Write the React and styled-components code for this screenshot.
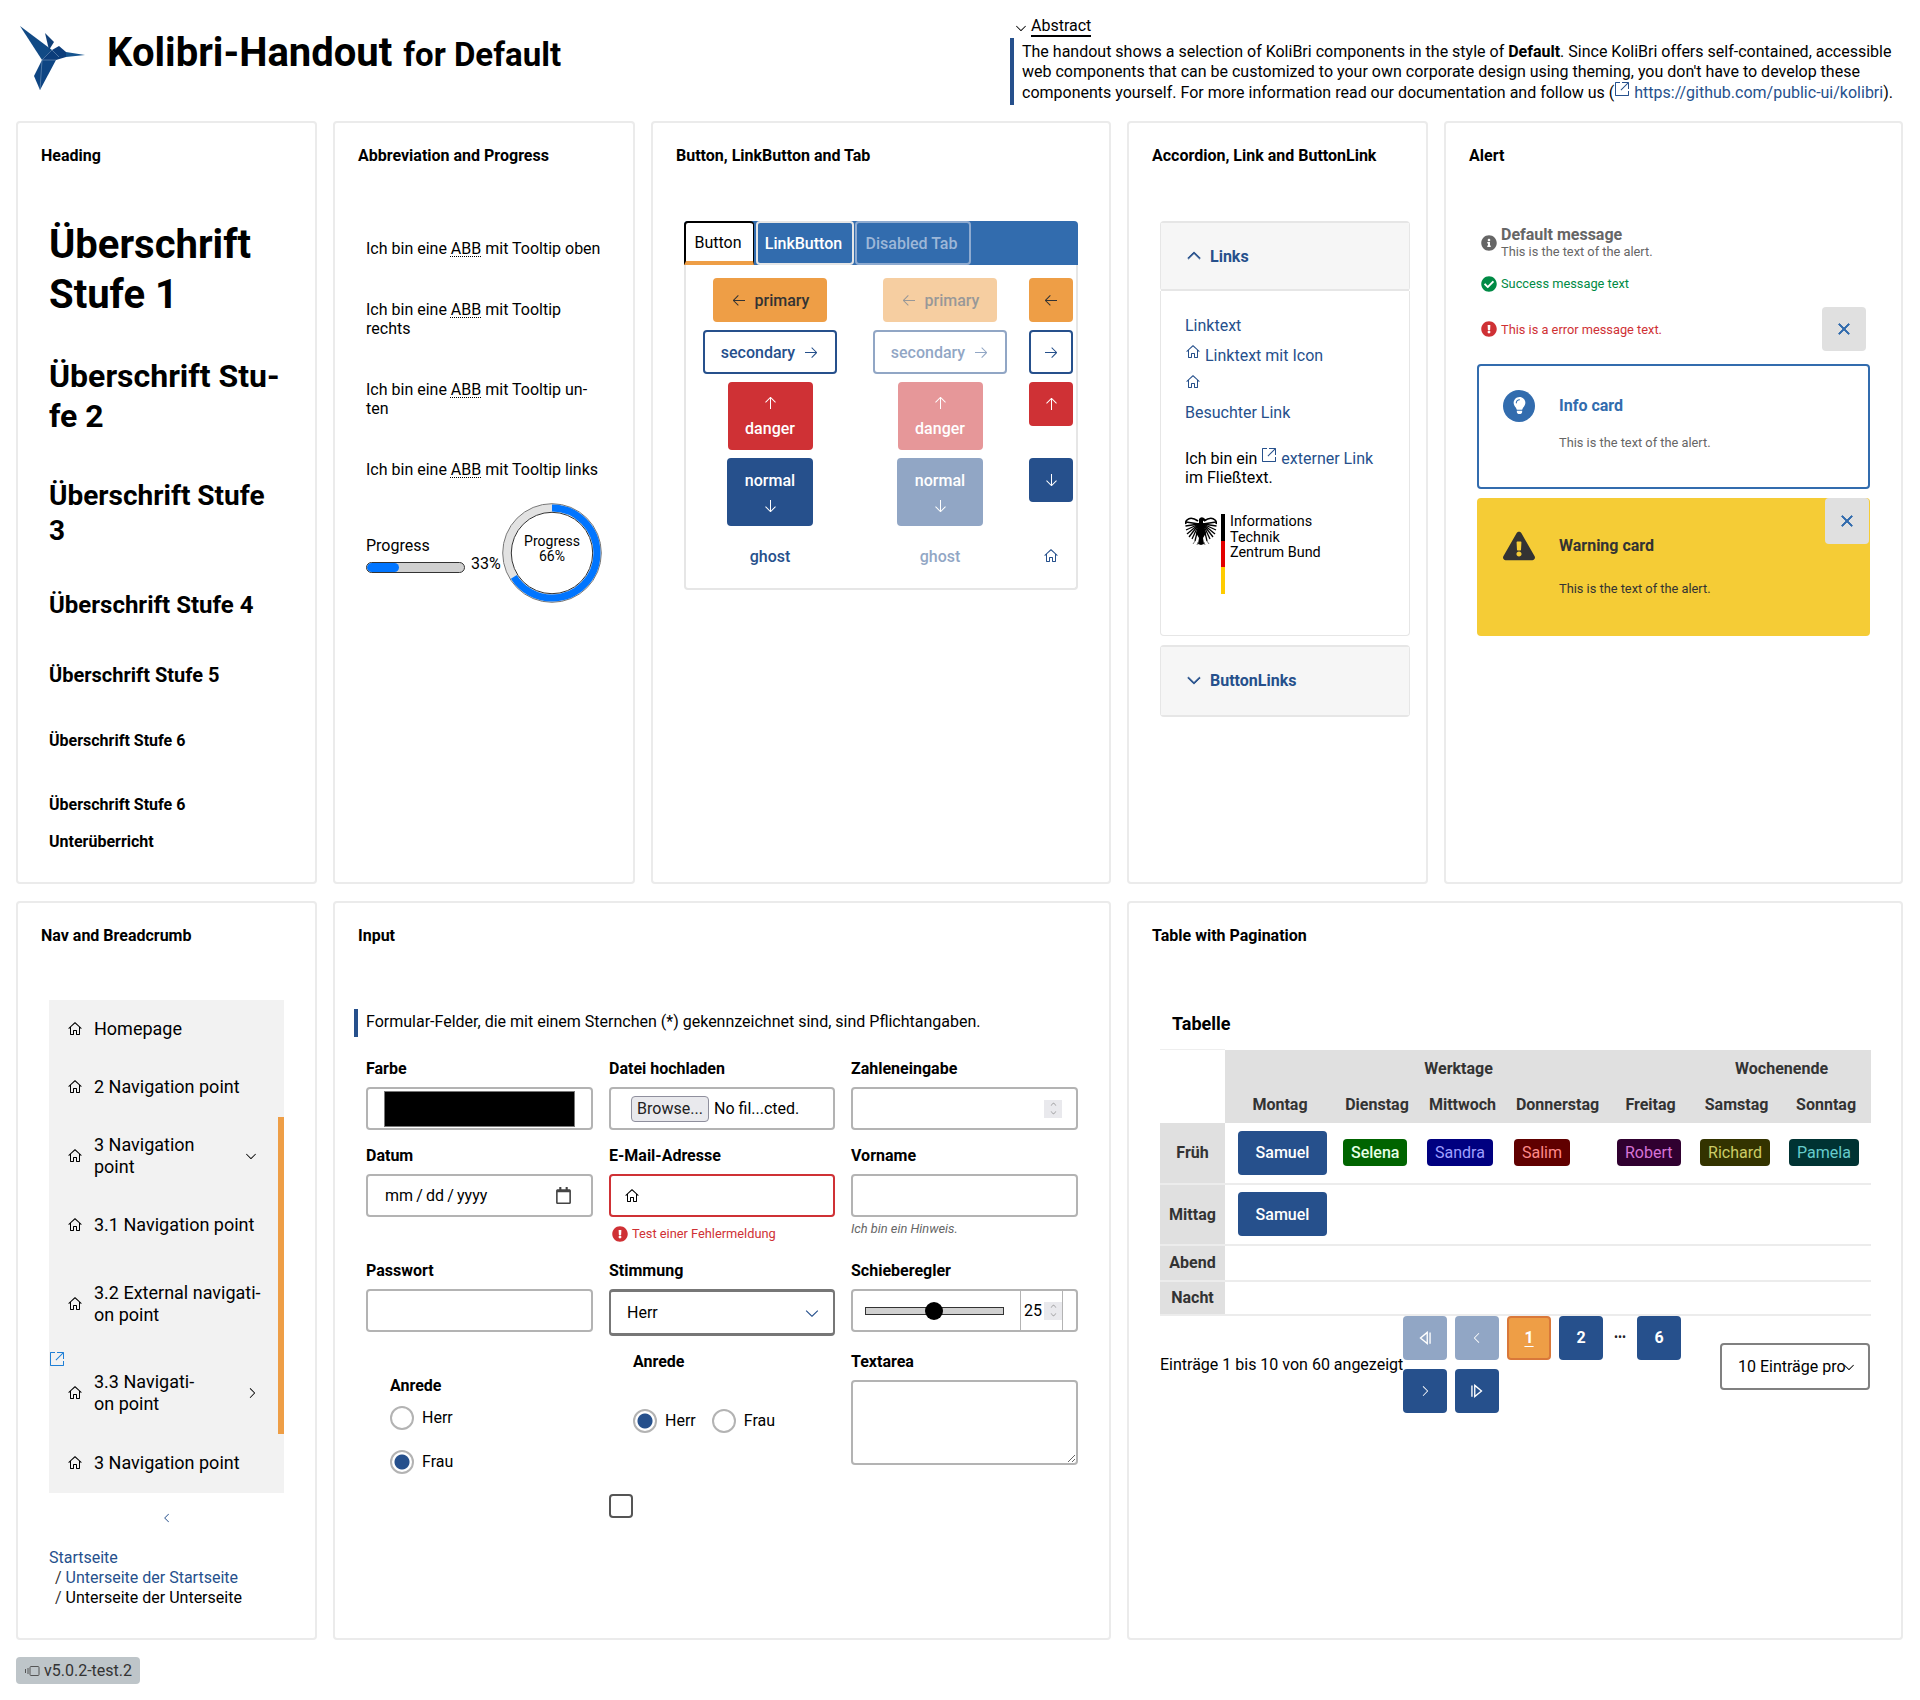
import React from 'react';
import styled, { createGlobalStyle } from 'styled-components';
import {
	VscHome,
	VscArrowLeft,
	VscArrowRight,
	VscArrowUp,
	VscArrowDown,
	VscChevronDown,
	VscChevronUp,
	VscChevronLeft,
	VscChevronRight,
	VscLinkExternal,
	VscClose,
} from 'react-icons/vsc';
import {
	FaInfoCircle,
	FaCheckCircle,
	FaExclamationCircle,
	FaExclamationTriangle,
	FaLightbulb,
	FaRegCalendar,
} from 'react-icons/fa';

const BLUE = '#26508c';
const TAB_BLUE = '#326cae';
const ORANGE = '#ee9e46';
const RED = '#cf3135';

const Global = createGlobalStyle`
	html, body { margin: 0; background: #fff; }
	body { font-family: Roboto, "Liberation Sans", sans-serif; font-size: 16px; color: #000; }
	* { box-sizing: border-box; }
`;

const Page = styled.div`
	width: 1920px;
	height: 1700px;
	padding: 0 17px 0 16px;
`;

const Header = styled.header`
	height: 121px;
	display: flex;
	align-items: flex-start;
`;

const Brand = styled.div`
	width: 994px;
	display: flex;
	align-items: flex-start;
	padding-top: 20px;
`;

const Logo = styled.svg`
	width: 72px;
	height: 72px;
	margin: 2px 17px 0 2px;
	flex: none;
`;

const Title = styled.h1`
	margin: 11px 0 0;
	font-size: 40px;
	line-height: 44px;
	font-weight: 700;
	white-space: nowrap;
	small { font-size: 33px; font-weight: 700; margin-left: 1px; }
`;

const Abstract = styled.div`
	width: 892px;
	padding-top: 16px;
`;

const Summary = styled.div`
	display: flex;
	align-items: center;
	height: 20px;
	margin-left: 3px;
	gap: 2px;
	svg { font-size: 16px; margin-top: 3px; }
	span { border-bottom: 2px solid #000; line-height: 19px; }
`;

const AbstractText = styled.p`
	margin: 2px 0 0;
	height: 67px;
	border-left: 4px solid ${BLUE};
	padding: 4px 0 0 8px;
	font-size: 16px;
	line-height: 20.4px;
	white-space: nowrap;
`;

const Link = styled.a`
	color: ${BLUE};
	text-decoration: none;
	svg { vertical-align: 1px; margin-top: -8px; }
`;

const Grid = styled.div`
	display: grid;
	grid-template-columns: 301px 302px 460px 301px 459px;
	grid-template-rows: 763px 739px;
	column-gap: 16px;
	row-gap: 17px;
`;

const Card = styled.section`
	grid-column: ${(p) => p.$col};
	border: 2px solid #ebebeb;
	border-radius: 4px;
	padding: 23px;
	position: relative;
`;

const CardTitle = styled.h2`
	margin: 0;
	font-size: 16px;
	line-height: 20px;
	font-weight: 700;
`;

const CardBody = styled.div`
	margin: ${(p) => p.$top}px 8px 0;
`;

const Heading = styled.div`
	font-size: ${(p) => p.$size}px;
	line-height: ${(p) => p.$lh}px;
	margin-top: ${(p) => p.$mt}px;
	font-weight: 700;
`;

const AbbrLine = styled.p`
	margin: 0 0 ${(p) => p.$mb}px;
	font-size: 16px;
	line-height: 19.5px;
	abbr { text-decoration: underline dotted 1px; text-underline-offset: 2px; }
`;

const ProgressRow = styled.div`
	display: flex;
	margin-top: 24px;
	height: 100px;
`;

const BarColumn = styled.div`
	padding-top: 33px;
	width: 99px;
`;

const BarLabel = styled.div`
	line-height: 20px;
	margin-bottom: 6px;
`;

const Bar = styled.div`
	height: 11px;
	width: 99px;
	border: 1px solid #333;
	border-radius: 6px;
	background: #d0d0d0;
	overflow: hidden;
`;

const BarFill = styled.div`
	height: 100%;
	background: #0075ff;
	border-radius: 5px;
`;

const BarValue = styled.div`
	margin: 51px 0 0 6px;
	line-height: 20px;
	width: 31px;
`;

const Ring = styled.div`
	position: relative;
	width: 100px;
	height: 100px;
	flex: none;
	svg { display: block; }
`;

const RingLabel = styled.div`
	position: absolute;
	inset: 31px 0 auto;
	text-align: center;
	font-size: 14px;
	line-height: 14.5px;
`;

const Tabs = styled.div`
	height: 44px;
	display: flex;
	align-items: stretch;
	background: ${TAB_BLUE};
	border-radius: 4px 4px 0 0;
`;

const Tab = styled.div`
	display: flex;
	align-items: center;
	justify-content: center;
	width: ${(p) => p.$w}px;
	margin-right: 1px;
	padding-right: 3px;
	border: 2px solid ${(p) => (p.$disabled ? '#8fabd0' : '#e6e6e6')};
	border-radius: 4px;
	color: ${(p) => (p.$disabled ? '#9db7d8' : '#fff')};
	font-weight: 500;
`;

const ActiveTab = styled.div`
	width: 70px;
	margin-right: 2px;
	padding-right: 3px;
	display: flex;
	align-items: center;
	justify-content: center;
	background: #fff;
	border: 2px solid #000;
	border-right-width: 1px;
	border-bottom: 4px solid ${ORANGE};
	border-radius: 4px 4px 0 0;
`;

const TabPanel = styled.div`
	display: grid;
	grid-template-columns: 162px 162px 44px;
	column-gap: 8px;
	row-gap: 8px;
	justify-items: center;
	align-items: start;
	padding: 13px 3px;
	border: 2px solid #e6e6e6;
	border-top: 0;
	border-radius: 0 0 4px 4px;
	height: 325px;
`;

const kinds = {
	primary: `background: ${ORANGE}; color: #333; border-color: ${ORANGE};`,
	secondary: `background: #fff; color: ${BLUE}; border-color: ${BLUE};`,
	danger: `background: ${RED}; color: #fff; border-color: ${RED};`,
	normal: `background: ${BLUE}; color: #fff; border-color: ${BLUE};`,
	ghost: `background: transparent; color: ${BLUE}; border-color: transparent;`,
};

const Btn = styled.button`
	${(p) => kinds[p.$kind]}
	width: ${(p) => p.$w}px;
	height: ${(p) => p.$h || 44}px;
	opacity: ${(p) => (p.$off ? 0.5 : 1)};
	border-width: 2px;
	border-style: solid;
	border-radius: 4px;
	padding: 0;
	font: 500 16px Roboto, sans-serif;
	display: flex;
	flex-direction: ${(p) => (p.$stack ? 'column' : 'row')};
	align-items: center;
	justify-content: center;
	gap: 8px;
	svg { font-size: 16px; flex: none; }
`;

const AccordionGroup = styled.div`
	margin-right: -15px;
`;

const Accordion = styled.div`
	border: 2px solid #e6e6e6;
	border-width: ${(p) => (p.$open ? '2px 1px 0' : '2px 1px')};
	border-radius: 4px;
`;

const AccordionHead = styled.div`
	height: 68px;
	display: flex;
	align-items: center;
	gap: 6px;
	padding: 0 0 ${(p) => (p.$open ? 0 : 2)}px 23px;
	background: #f6f6f6;
	border-bottom: ${(p) => (p.$open ? '2px solid #e6e6e6' : 'none')};
	color: ${BLUE};
	font-weight: 700;
	svg { font-size: 20px; stroke-width: 0.8; }
`;

const AccordionPanel = styled.div`
	height: 345px;
	padding: 25px 0 0 24px;
	border: 1px solid #e6e6e6;
	border-top: 0;
	border-radius: 0 0 4px 4px;
	margin-bottom: 9px;
`;

const LinkLine = styled.div`
	line-height: 20px;
	margin-bottom: ${(p) => p.$mb}px;
	color: ${BLUE};
	svg { vertical-align: 1px; margin-top: -8px; }
`;

const FlowText = styled.p`
	margin: 0;
	line-height: 19px;
`;

const LogoBlock = styled.div`
	display: flex;
	margin-top: 27px;
`;

const Eagle = styled.svg`
	width: 32px;
	height: 30px;
	margin-top: 2px;
	margin-right: 4px;
`;

const Stripe = styled.div`
	width: 4px;
	height: 80px;
	background: linear-gradient(#000 33.3%, #e30000 33.3%, #e30000 66.6%, #fc0 66.6%);
	margin-right: 5px;
`;

const LogoText = styled.div`
	font-size: 14.4px;
	line-height: 15.6px;
`;

const toneColor = { info: '#666', ok: '#008a45', err: RED };

const AlertRow = styled.div`
	display: flex;
	align-items: center;
	gap: 4px;
	margin-left: 4px;
	color: ${(p) => toneColor[p.$tone]};
	font-size: 12.8px;
	line-height: 15px;
	height: ${(p) => p.$h}px;
	margin-bottom: ${(p) => p.$mb}px;
	> svg { font-size: 16px; flex: none; }
	b { display: block; font-size: 16px; line-height: 18px; }
`;

const CloseBtn = styled.div`
	width: 44px;
	height: 44px;
	background: #e0e0e0;
	border-radius: 4px;
	display: flex;
	align-items: center;
	justify-content: center;
	color: ${TAB_BLUE};
	font-size: 20px;
	margin-left: auto;
	margin-right: 4px;
	svg { stroke-width: 0.8; }
`;

const CornerClose = styled(CloseBtn)`
	position: absolute;
	top: 0;
	right: 1px;
	height: 46px;
	margin: 0;
`;

const AlertCard = styled.div`
	position: relative;
	display: grid;
	grid-template-columns: 32px 1fr;
	align-content: start;
	column-gap: 24px;
	height: ${(p) => p.$h}px;
	padding: ${(p) => p.$pt}px 24px 0 ${(p) => (p.$warn ? 26 : 24)}px;
	border-radius: 4px;
	margin-bottom: 9px;
	border: ${(p) => (p.$warn ? 'none' : `2px solid ${TAB_BLUE}`)};
	background: ${(p) => (p.$warn ? '#f5cc36' : '#fff')};
	color: ${(p) => (p.$warn ? '#333' : TAB_BLUE)};
`;

const AlertCardTitle = styled.div`
	font-weight: 700;
	font-size: 16px;
	line-height: 32px;
	height: 32px;
`;

const AlertCardText = styled.div`
	grid-column: 2;
	font-size: 12.8px;
	line-height: 14px;
	color: ${(p) => (p.$warn ? '#333' : '#666')};
	margin-top: ${(p) => p.$mt}px;
`;

const BulbCircle = styled.div`
	width: 32px;
	height: 32px;
	border-radius: 50%;
	background: ${TAB_BLUE};
	color: #fff;
	display: flex;
	align-items: center;
	justify-content: center;
	font-size: 17px;
`;

const NavBox = styled.nav`
	position: relative;
	background: #f2f2f2;
	width: 235px;
	height: 493px;
`;

const NavActive = styled.div`
	position: absolute;
	right: 0;
	top: 117px;
	width: 6px;
	height: 317px;
	background: ${ORANGE};
`;

const NavItem = styled.div`
	position: relative;
	display: flex;
	align-items: center;
	height: ${(p) => p.$h}px;
	padding-left: 18px;
	font-size: 18px;
	line-height: 22px;
	> svg:first-child { font-size: 16px; flex: none; margin-right: 11px; }
`;

const NavExternal = styled.span`
	position: absolute;
	left: 0;
	bottom: -17px;
	font-size: 16px;
	color: #1f7fd6;
	line-height: 16px;
`;

const NavLabel = styled.span`
	width: ${(p) => p.$w}px;
`;

const NavChevron = styled.span`
	margin-left: ${(p) => p.$ml}px;
	font-size: 16px;
	display: flex;
`;

const Collapse = styled.div`
	width: 235px;
	text-align: center;
	color: ${BLUE};
	margin-top: 18px;
	height: 16px;
	font-size: 14px;
`;

const Crumbs = styled.div`
	margin-top: 21px;
	line-height: 20px;
`;

const Crumb = styled.div`
	padding-left: ${(p) => (p.$sub ? 6 : 0)}px;
	color: ${(p) => (p.$link ? BLUE : '#000')};
	span { color: #333; margin-right: 4px; }
`;

const Notice = styled.p`
	margin: 63px 0 0 -12px;
	height: 28px;
	line-height: 26px;
	border-left: 4px solid ${BLUE};
	padding-left: 8px;
`;

const FieldGrid = styled.div`
	margin-top: 22px;
	display: grid;
	grid-template-columns: 227px 226px 227px;
	column-gap: 16px;
	row-gap: 16px;
	align-items: start;
`;

const Field = styled.div`
	padding: ${(p) => p.$pad || '0'};
	grid-column: ${(p) => p.$col || 'auto'};
`;

const Label = styled.label`
	display: block;
	font-weight: 700;
	line-height: 20px;
	margin-bottom: ${(p) => p.$mb || 8}px;
`;

const Box = styled.div`
	height: ${(p) => p.$h || 43}px;
	border: 2px solid ${(p) => p.$color || '#b3b3b3'};
	${(p) => p.$thick && 'border-top-width: 3px; border-bottom-width: 3px;'}
	border-radius: 4px;
	display: flex;
	align-items: center;
	padding: 0 ${(p) => p.$pad ?? 16}px;
	background: #fff;
	position: relative;
`;

const TextInput = styled.input`
	display: block;
	width: 100%;
	height: 43px;
	border: 2px solid #b3b3b3;
	border-radius: 4px;
	background: #fff;
	outline: none;
`;

const TextArea = styled.textarea`
	display: block;
	width: 100%;
	height: 85px;
	border: 2px solid #b3b3b3;
	border-radius: 4px;
	outline: none;
	resize: vertical;
`;

const Swatch = styled.div`
	width: 191px;
	height: 36px;
	background: #000;
	border: 1px solid #777;
`;

const BrowseBtn = styled.span`
	height: 26px;
	width: 78px;
	background: #e9e9ed;
	border: 1px solid #8f8f9d;
	border-radius: 4px;
	text-align: center;
	line-height: 24px;
	margin-right: 5px;
	color: #222;
`;

const DateText = styled.span`
	word-spacing: -0.8px;
`;

const Spin = styled.span`
	width: ${(p) => p.$w || 18}px;
	height: 18px;
	background: #e9e9ed;
	display: flex;
	flex-direction: column;
	align-items: center;
	justify-content: center;
	color: #777;
	font-size: 9px;
	line-height: 8px;
	margin-left: auto;
	svg { display: block; margin: -0.5px 0; }
`;

const Trailing = styled.span`
	margin-left: auto;
	margin-right: ${(p) => p.$mr || 0}px;
	display: flex;
	font-size: ${(p) => p.$size || 16}px;
	color: ${(p) => p.$color};
`;

const ErrorText = styled.div`
	margin: 7px 0 0 3px;
	display: flex;
	align-items: center;
	gap: 4px;
	height: 19px;
	font-size: 12.8px;
	color: ${RED};
	svg { font-size: 16px; }
`;

const Hint = styled.div`
	margin-top: 3px;
	height: 25px;
	line-height: 18px;
	font-size: 12.8px;
	font-style: italic;
	color: #666;
`;

const SliderBox = styled(Box)`
	padding: 0 0 0 12px;
	overflow: hidden;
`;

const Track = styled.div`
	position: relative;
	width: 139px;
	height: 8px;
	background: #d0d0d0;
	border: 1px solid #333;
`;

const Thumb = styled.div`
	position: absolute;
	left: 59px;
	top: -6px;
	width: 18px;
	height: 18px;
	border-radius: 50%;
	background: #000;
`;

const SliderValue = styled.div`
	display: flex;
	align-items: center;
	width: 43px;
	height: 100%;
	margin-left: 16px;
	padding-left: 3px;
	border-left: 1px solid #b3b3b3;
	border-right: 1px solid #b3b3b3;
`;

const Radio = styled.input.attrs({ type: 'radio' })`
	appearance: none;
	width: 24px;
	height: 24px;
	margin: 0;
	border-radius: 50%;
	border: 2px solid #b3b3b3;
	background: #fff;
	flex: none;
	&:checked { background: radial-gradient(circle, ${BLUE} 0, ${BLUE} 7px, #fff 8px); }
`;

const RadioRow = styled.label`
	display: inline-flex;
	align-items: center;
	gap: 8px;
	margin-right: ${(p) => p.$mr || 0}px;
	margin-bottom: ${(p) => p.$mb || 0}px;
	line-height: 24px;
`;

const RadioLine = styled.div`
	margin-top: ${(p) => p.$mt || 0}px;
`;

const Check = styled.input.attrs({ type: 'checkbox' })`
	appearance: none;
	display: block;
	width: 24px;
	height: 24px;
	margin: 0;
	border: 2px solid #555;
	border-radius: 4px;
	background: #fff;
`;

const TableTitle = styled.div`
	margin: 67px 0 0 12px;
	font-size: 18px;
	font-weight: 700;
	line-height: 22px;
`;

const TableWrap = styled.div`
	margin: 14px 0 0;
	width: 711px;
`;

const Table = styled.table`
	width: 711px;
	table-layout: fixed;
	border-collapse: collapse;
`;

const Col = styled.col`
	width: ${(p) => p.$w}px;
`;

const HeadCell = styled.th`
	background: #e0e0e0;
	color: #333;
	font-weight: 700;
	font-size: 16px;
	padding: 0;
	height: ${(p) => p.$h}px;
	text-align: center;
`;

const EmptyCorner = styled.th`
	background: #fff;
	border-top: 1px solid #eee;
`;

const DataRow = styled.tr`
	border-bottom: 2px solid #ececec;
	height: ${(p) => p.$h}px;
`;

const Cell = styled.td`
	padding: 0 0 0 ${(p) => p.$pl || 8}px;
	vertical-align: middle;
`;

const Chip = styled.span`
	display: inline-block;
	height: 27px;
	line-height: 27px;
	padding: 0 8px;
	border-radius: 4px;
	background: ${(p) => p.$bg};
	color: ${(p) => p.$fg};
	font-weight: ${(p) => p.$w || 400};
	vertical-align: middle;
`;

const Samuel = styled.span`
	display: flex;
	align-items: center;
	justify-content: center;
	width: 89px;
	height: 44px;
	background: ${BLUE};
	color: #fff;
	border-radius: 4px;
	font-weight: 500;
`;

const Pager = styled.div`
	display: flex;
	align-items: flex-start;
`;

const PagerText = styled.div`
	width: 243px;
	margin-top: 39px;
	line-height: 20px;
	white-space: nowrap;
`;

const PagerButtons = styled.div`
	width: 300px;
	display: flex;
	flex-wrap: wrap;
	gap: 9px 8px;
`;

const PageBtn = styled.div`
	width: 44px;
	height: 44px;
	border-radius: 4px;
	display: flex;
	align-items: center;
	justify-content: center;
	font-weight: 700;
	background: ${(p) => (p.$current ? ORANGE : BLUE)};
	border: ${(p) => (p.$current ? '2px solid #d9783a' : 'none')};
	color: #fff;
	opacity: ${(p) => (p.$off ? 0.5 : 1)};
	text-decoration: ${(p) => (p.$current ? 'underline' : 'none')};
	text-underline-offset: 3px;
`;

const Dots = styled.div`
	width: 18px;
	height: 44px;
	text-align: center;
	line-height: 42px;
	font-size: 12px;
	white-space: nowrap;
	color: #222;
`;

const PageSize = styled.div`
	margin: 27px 0 0 18px;
	width: 150px;
	height: 47px;
	flex: none;
	border: 2px solid #808080;
	border-radius: 4px;
	display: flex;
	align-items: center;
	padding-left: 16px;
	white-space: nowrap;
	position: relative;
	svg { position: absolute; right: 11px; top: 14px; font-size: 16px; }
`;

const Version = styled.div`
	display: inline-flex;
	align-items: center;
	gap: 4px;
	height: 27px;
	width: 124px;
	margin-top: 17px;
	padding-left: 8px;
	border-radius: 4px;
	background: #bec5c9;
	color: #333;
	svg { flex: none; }
`;

const Home = ({ size = 16 }) => <VscHome size={size} />;
const External = () => <VscLinkExternal size={16} />;

const FirstIcon = () => (
	<svg width="18" height="18" viewBox="0 0 16 16" fill="none" stroke="currentColor" strokeWidth="1.2">
		<path d="M10 3 L4 8 L10 13 Z" />
		<path d="M12.5 3 V13" />
	</svg>
);

const LastIcon = () => (
	<svg width="18" height="18" viewBox="0 0 16 16" fill="none" stroke="currentColor" strokeWidth="1.2">
		<path d="M6 3 L12 8 L6 13 Z" />
		<path d="M3.5 3 V13" />
	</svg>
);

const BirdLogo = () => (
	<Logo viewBox="19 22 72 72">
		<polygon points="21,26 53,50 43,60" fill="#114a85" />
		<polygon points="46,33 55,42 50,50" fill="#0f3f78" />
		<polygon points="43,60 53,50 60,46 67,52 67,57 57,60" fill="#0c3d7b" />
		<polygon points="67,52 86,55 67,57" fill="#15548f" />
		<polygon points="43,60 57,60 41,90 35,76" fill="#0e4583" />
		<path d="M43 60 L57 60 M53 50 L60 57 M43 60 L41 90" stroke="#8eaac8" strokeWidth="0.5" fill="none" />
	</Logo>
);

const wingTips = [
	[1, 6],
	[0.5, 10],
	[1, 14],
	[2, 18],
	[4, 21],
	[7, 23],
	[10, 25],
];

const EagleLogo = () => (
	<Eagle viewBox="0 0 32 30">
		<g stroke="#000" fill="none">
			<path d="M13 5 Q 6 0 2 4 Q 0 6 1 8 M19 5 Q 26 0 30 4 Q 32 6 31 8" strokeWidth="1.6" />
			{wingTips.map(([x, y]) => (
				<g key={y} strokeWidth="1.3">
					<path d={`M14 8 L${x} ${y}`} />
					<path d={`M18 8 L${32 - x} ${y}`} />
				</g>
			))}
			<path d="M10 25 L8 28 M13 26 L12 29 M19 26 L20 29 M22 25 L24 28" strokeWidth="1" stroke="#777" />
		</g>
		<path d="M14 3 Q 16 0 19 2 L21 4 L18 5 L18 9 L21 17 L18 22 L19 28 L16 29 L13 28 L14 22 L11 17 L14 9 Z" fill="#000" />
	</Eagle>
);

const RingChart = () => (
	<svg width="100" height="100" viewBox="0 0 100 100">
		<circle cx="50" cy="50" r="45" fill="none" stroke="#e2e2e2" strokeWidth="8" />
		<circle cx="50" cy="50" r="49.3" fill="none" stroke="#777" strokeWidth="1" />
		<circle cx="50" cy="50" r="40.7" fill="none" stroke="#333" strokeWidth="1" />
		<circle
			cx="50"
			cy="50"
			r="45"
			fill="none"
			stroke="#0075ff"
			strokeWidth="7"
			strokeDasharray={`${2 * Math.PI * 45 * 0.66} 400`}
			transform="rotate(-90 50 50)"
		/>
	</svg>
);

const buttonRows = [
	{ kind: 'primary', w: 114, label: 'primary', before: <VscArrowLeft /> },
	{ kind: 'secondary', w: 134, label: 'secondary', after: <VscArrowRight /> },
	{ kind: 'danger', w: 85, h: 68, stack: true, label: 'danger', before: <VscArrowUp /> },
	{ kind: 'normal', w: 86, h: 68, stack: true, label: 'normal', after: <VscArrowDown /> },
	{ kind: 'ghost', w: 114, label: 'ghost' },
];

const iconFor = {
	primary: <VscArrowLeft />,
	secondary: <VscArrowRight />,
	danger: <VscArrowUp />,
	normal: <VscArrowDown />,
	ghost: <VscHome />,
};

const slots = [
	{ name: 'Früh', h: 61, chips: true },
	{ name: 'Mittag', h: 61 },
	{ name: 'Abend', h: 36 },
	{ name: 'Nacht', h: 34 },
];

const chips = [
	{ text: 'Selena', bg: '#006400', fg: '#e6ffe6', w: 500 },
	{ text: 'Sandra', bg: '#000080', fg: '#9f9fff' },
	{ text: 'Salim', bg: '#600000', fg: '#ff8a8a' },
	{ text: 'Robert', bg: '#300030', fg: '#d673d6' },
	{ text: 'Richard', bg: '#333300', fg: '#cccc66' },
	{ text: 'Pamela', bg: '#003333', fg: '#66cccc' },
];

const columnWidths = [65, 110, 84, 87, 103, 83, 89, 90];

const App = () => {
	return (
		<Page>
			<Global />
			<Header>
				<Brand>
					<BirdLogo />
					<Title>
						Kolibri-Handout <small>for Default</small>
					</Title>
				</Brand>
				<Abstract>
					<Summary>
						<VscChevronDown />
						<span>Abstract</span>
					</Summary>
					<AbstractText>
						The handout shows a selection of KoliBri components in the style of <b>Default</b>. Since KoliBri offers self-contained, accessible
						<br />
						web components that can be customized to your own corporate design using theming, you don&apos;t have to develop these
						<br />
						components yourself. For more information read our documentation and follow us (
						<Link href="#">
							<External /> https://github.com/public-ui/kolibri
						</Link>
						).
					</AbstractText>
				</Abstract>
			</Header>

			<Grid>
				<Card $col="1">
					<CardTitle>Heading</CardTitle>
					<CardBody $top={54}>
						<Heading $size={40} $lh={50} $mt={0}>Überschrift Stufe 1</Heading>
						<Heading $size={32} $lh={40} $mt={36}>Überschrift Stu&shy;fe 2</Heading>
						<Heading $size={28} $lh={35} $mt={42}>Überschrift Stufe 3</Heading>
						<Heading $size={24} $lh={30} $mt={42}>Überschrift Stufe 4</Heading>
						<Heading $size={20} $lh={25} $mt={43}>Überschrift Stufe 5</Heading>
						<Heading $size={16} $lh={20} $mt={43}>Überschrift Stufe 6</Heading>
						<Heading $size={16} $lh={20} $mt={44}>Überschrift Stufe 6</Heading>
						<Heading $size={16} $lh={20} $mt={17}>Unterüberricht</Heading>
					</CardBody>
				</Card>

				<Card $col="2">
					<CardTitle>Abbreviation and Progress</CardTitle>
					<CardBody $top={73}>
						<AbbrLine $mb={41}>Ich bin eine <abbr>ABB</abbr> mit Tooltip oben</AbbrLine>
						<AbbrLine $mb={41}>Ich bin eine <abbr>ABB</abbr> mit Tooltip rechts</AbbrLine>
						<AbbrLine $mb={41}>Ich bin eine <abbr>ABB</abbr> mit Tooltip un&shy;ten</AbbrLine>
						<AbbrLine $mb={0}>Ich bin eine <abbr>ABB</abbr> mit Tooltip links</AbbrLine>
						<ProgressRow>
							<BarColumn>
								<BarLabel>Progress</BarLabel>
								<Bar>
									<BarFill style={{ width: '33%' }} />
								</Bar>
							</BarColumn>
							<BarValue>33%</BarValue>
							<Ring>
								<RingChart />
								<RingLabel>
									Progress
									<br />
									66%
								</RingLabel>
							</Ring>
						</ProgressRow>
					</CardBody>
				</Card>

				<Card $col="3">
					<CardTitle>Button, LinkButton and Tab</CardTitle>
					<CardBody $top={55}>
						<Tabs>
							<ActiveTab>Button</ActiveTab>
							<Tab $w={98}>LinkButton</Tab>
							<Tab $w={116} $disabled>Disabled Tab</Tab>
						</Tabs>
						<TabPanel>
							{buttonRows.map((b) => (
								<React.Fragment key={b.kind}>
									{[false, true].map((off) => (
										<Btn key={String(off)} $kind={b.kind} $w={b.w} $h={b.h} $stack={b.stack} $off={off}>
											{b.before}
											{b.label}
											{b.after}
										</Btn>
									))}
									<Btn $kind={b.kind} $w={44}>{iconFor[b.kind]}</Btn>
								</React.Fragment>
							))}
						</TabPanel>
					</CardBody>
				</Card>

				<Card $col="4">
					<CardTitle>Accordion, Link and ButtonLink</CardTitle>
					<CardBody $top={55}>
						<AccordionGroup>
							<Accordion $open>
								<AccordionHead $open>
									<VscChevronUp />
									Links
								</AccordionHead>
							</Accordion>
							<AccordionPanel>
								<LinkLine $mb={10}>Linktext</LinkLine>
								<LinkLine $mb={10}><Home /> Linktext mit Icon</LinkLine>
								<LinkLine $mb={7}><Home /></LinkLine>
								<LinkLine $mb={26}>Besuchter Link</LinkLine>
								<FlowText>
									Ich bin ein <Link href="#"><External /> externer Link</Link>
									<br />
									im Fließtext.
								</FlowText>
								<LogoBlock>
									<EagleLogo />
									<Stripe />
									<LogoText>
										Informations
										<br />
										Technik
										<br />
										Zentrum Bund
									</LogoText>
								</LogoBlock>
							</AccordionPanel>
							<Accordion>
								<AccordionHead>
									<VscChevronDown />
									ButtonLinks
								</AccordionHead>
							</Accordion>
						</AccordionGroup>
					</CardBody>
				</Card>

				<Card $col="5">
					<CardTitle>Alert</CardTitle>
					<CardBody $top={55}>
						<AlertRow $tone="info" $h={43} $mb={0}>
							<FaInfoCircle />
							<div>
								<b>Default message</b>
								This is the text of the alert.
							</div>
						</AlertRow>
						<AlertRow $tone="ok" $h={39} $mb={4}>
							<FaCheckCircle />
							Success message text
						</AlertRow>
						<AlertRow $tone="err" $h={44} $mb={12.5}>
							<FaExclamationCircle />
							This is a error message text.
							<CloseBtn><VscClose /></CloseBtn>
						</AlertRow>
						<AlertCard $h={125} $pt={24}>
							<BulbCircle><FaLightbulb /></BulbCircle>
							<AlertCardTitle>Info card</AlertCardTitle>
							<AlertCardText $mt={14}>This is the text of the alert.</AlertCardText>
						</AlertCard>
						<AlertCard $warn $h={138} $pt={32}>
							<FaExclamationTriangle size={32} />
							<AlertCardTitle>Warning card</AlertCardTitle>
							<AlertCardText $warn $mt={20}>This is the text of the alert.</AlertCardText>
							<CornerClose><VscClose /></CornerClose>
						</AlertCard>
					</CardBody>
				</Card>

				<Card $col="1">
					<CardTitle>Nav and Breadcrumb</CardTitle>
					<CardBody $top={54}>
						<NavBox>
							<NavActive />
							<NavItem $h={58}><Home /><NavLabel>Homepage</NavLabel></NavItem>
							<NavItem $h={58}><Home /><NavLabel>2 Navigation point</NavLabel></NavItem>
							<NavItem $h={80}>
								<Home />
								<NavLabel $w={130}>3 Navigation point</NavLabel>
								<NavChevron $ml={19}><VscChevronDown /></NavChevron>
							</NavItem>
							<NavItem $h={58}><Home /><NavLabel>3.1 Navigation point</NavLabel></NavItem>
							<NavItem $h={99}>
								<Home />
								<NavLabel $w={175}>3.2 External navigati-<br />on point</NavLabel>
								<NavExternal><External /></NavExternal>
							</NavItem>
							<NavItem $h={80}>
								<Home />
								<NavLabel $w={130}>3.3 Navigati-<br />on point</NavLabel>
								<NavChevron $ml={20}><VscChevronRight /></NavChevron>
							</NavItem>
							<NavItem $h={60}><Home /><NavLabel>3 Navigation point</NavLabel></NavItem>
						</NavBox>
						<Collapse><VscChevronLeft /></Collapse>
						<Crumbs>
							<Crumb $link>Startseite</Crumb>
							<Crumb $sub $link><span>/</span>Unterseite der Startseite</Crumb>
							<Crumb $sub><span>/</span>Unterseite der Unterseite</Crumb>
						</Crumbs>
					</CardBody>
				</Card>

				<Card $col="2 / 4">
					<CardTitle>Input</CardTitle>
					<CardBody $top={0}>
						<Notice>Formular-Felder, die mit einem Sternchen (*) gekennzeichnet sind, sind Pflichtangaben.</Notice>
						<FieldGrid>
							<Field>
								<Label>Farbe</Label>
								<Box><Swatch /></Box>
							</Field>
							<Field>
								<Label>Datei hochladen</Label>
								<Box $pad={20}><BrowseBtn>Browse...</BrowseBtn>No fil...cted.</Box>
							</Field>
							<Field>
								<Label>Zahleneingabe</Label>
								<Box $pad={14}>
									<Spin><VscChevronUp /><VscChevronDown /></Spin>
								</Box>
							</Field>
							<Field>
								<Label>Datum</Label>
								<Box $pad={17}>
									<DateText>mm / dd / yyyy</DateText>
									<Trailing $color="#444" $mr={2} $size={17}><FaRegCalendar /></Trailing>
								</Box>
							</Field>
							<Field>
								<Label>E-Mail-Adresse</Label>
								<Box $color={RED} $pad={13}><Home /></Box>
								<ErrorText><FaExclamationCircle />Test einer Fehlermeldung</ErrorText>
							</Field>
							<Field>
								<Label>Vorname</Label>
								<TextInput />
								<Hint>Ich bin ein Hinweis.</Hint>
							</Field>
							<Field>
								<Label>Passwort</Label>
								<TextInput type="password" />
							</Field>
							<Field>
								<Label>Stimmung</Label>
								<Box $h={47} $color="#777" $thick>
									Herr
									<Trailing $color={BLUE} $mr={-5} $size={20}><VscChevronDown /></Trailing>
								</Box>
							</Field>
							<Field>
								<Label>Schieberegler</Label>
								<SliderBox>
									<Track><Thumb /></Track>
									<SliderValue>
										25
										<Spin $w={18}><VscChevronUp /><VscChevronDown /></Spin>
									</SliderValue>
								</SliderBox>
							</Field>
							<Field $pad="24px 0 0 24px">
								<Label $mb={10}>Anrede</Label>
								<RadioLine><RadioRow $mb={20}><Radio name="a" />Herr</RadioRow></RadioLine>
								<RadioLine><RadioRow><Radio name="a" defaultChecked />Frau</RadioRow></RadioLine>
							</Field>
							<Field $pad="0 0 0 24px">
								<Label>Anrede</Label>
								<RadioLine $mt={37}>
									<RadioRow $mr={16}><Radio name="b" defaultChecked />Herr</RadioRow>
									<RadioRow><Radio name="b" />Frau</RadioRow>
								</RadioLine>
							</Field>
							<Field>
								<Label>Textarea</Label>
								<TextArea />
							</Field>
							<Field $col="2">
								<Check />
							</Field>
						</FieldGrid>
					</CardBody>
				</Card>

				<Card $col="4 / 6">
					<CardTitle>Table with Pagination</CardTitle>
					<CardBody $top={0}>
						<TableTitle>Tabelle</TableTitle>
						<TableWrap>
							<Table>
								<colgroup>
									{columnWidths.map((w, i) => (
										<Col key={i} $w={w} />
									))}
								</colgroup>
								<thead>
									<tr>
										<EmptyCorner rowSpan={2} />
										<HeadCell colSpan={5} $h={37}>Werktage</HeadCell>
										<HeadCell colSpan={2} $h={37}>Wochenende</HeadCell>
									</tr>
									<tr>
										{['Montag', 'Dienstag', 'Mittwoch', 'Donnerstag', 'Freitag', 'Samstag', 'Sonntag'].map((d) => (
											<HeadCell key={d} $h={36}>{d}</HeadCell>
										))}
									</tr>
								</thead>
								<tbody>
									{slots.map((s, i) => (
										<DataRow key={s.name} $h={s.h}>
											<HeadCell>{s.name}</HeadCell>
											<Cell $pl={13}>{i < 2 && <Samuel>Samuel</Samuel>}</Cell>
											{s.chips
												? chips.map((c) => (
														<Cell key={c.text}>
															<Chip $bg={c.bg} $fg={c.fg} $w={c.w}>{c.text}</Chip>
														</Cell>
													))
												: <Cell colSpan={6} />}
										</DataRow>
									))}
								</tbody>
							</Table>
						</TableWrap>
						<Pager>
							<PagerText>Einträge 1 bis 10 von 60 angezeigt</PagerText>
							<PagerButtons>
								<PageBtn $off><FirstIcon /></PageBtn>
								<PageBtn $off><VscChevronLeft /></PageBtn>
								<PageBtn $current>1</PageBtn>
								<PageBtn>2</PageBtn>
								<Dots>•••</Dots>
								<PageBtn>6</PageBtn>
								<PageBtn><VscChevronRight /></PageBtn>
								<PageBtn><LastIcon /></PageBtn>
							</PagerButtons>
							<PageSize>
								10 Einträge pro
								<VscChevronDown />
							</PageSize>
						</Pager>
					</CardBody>
				</Card>
			</Grid>

			<Version>
				<svg width="16" height="12" viewBox="0 0 16 12" fill="none" stroke="#555" strokeWidth="1">
					<rect x="6" y="1.5" width="9" height="9" rx="1" />
					<path d="M4 3 V9 M1.5 4 V8" />
				</svg>
				v5.0.2-test.2
			</Version>
		</Page>
	);
};

export default App;
